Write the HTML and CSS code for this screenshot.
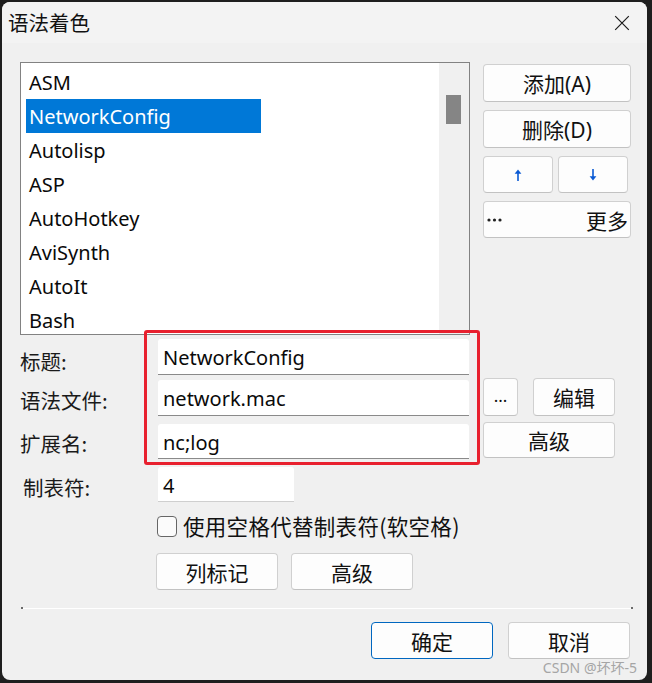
FILE: index.html
```html
<!DOCTYPE html>
<html lang="zh-CN">
<head>
<meta charset="utf-8">
<title>语法着色</title>
<link rel="stylesheet" href="styles.css">
</head>
<body>
<div class="window">
  <div class="titlebar">
    <span class="title">语法着色</span>
    <svg class="close" width="16" height="16" viewBox="0 0 16 16"><path d="M1.2 1.2L14.8 14.8M14.8 1.2L1.2 14.8" stroke="#1b1b1b" stroke-width="1.2" fill="none"/></svg>
  </div>
  <div class="content">
    <div class="top">
      <div class="listbox">
        <ul class="items">
          <li>ASM</li>
          <li class="sel">NetworkConfig</li>
          <li>Autolisp</li>
          <li>ASP</li>
          <li>AutoHotkey</li>
          <li>AviSynth</li>
          <li>AutoIt</li>
          <li>Bash</li>
        </ul>
        <div class="scrollbar"><div class="thumb"></div></div>
      </div>
      <div class="side">
        <button class="btn wide">添加(A)</button>
        <button class="btn wide">删除(D)</button>
        <div class="pair">
          <button class="btn half"><svg width="8" height="12" viewBox="0 0 8 12"><path d="M4 2.5V12" stroke="#0a5ad4" stroke-width="1.6"/><path d="M0.6 4.8L4 0.6L7.4 4.8Z" fill="#0a5ad4"/></svg></button>
          <button class="btn half"><svg width="8" height="12" viewBox="0 0 8 12"><path d="M4 0V9.5" stroke="#0a5ad4" stroke-width="1.6"/><path d="M0.6 7.2L4 11.4L7.4 7.2Z" fill="#0a5ad4"/></svg></button>
        </div>
        <button class="btn wide more"><svg class="dots" width="15" height="4" viewBox="0 0 15 4"><circle cx="2" cy="2" r="1.6" fill="#222"/><circle cx="7.5" cy="2" r="1.6" fill="#222"/><circle cx="13" cy="2" r="1.6" fill="#222"/></svg><span>更多</span></button>
      </div>
    </div>

    <div class="form">
      <div class="annot"></div>
      <div class="row r1">
        <span class="label">标题:</span>
        <div class="input wide-in">NetworkConfig</div>
      </div>
      <div class="row r2">
        <span class="label">语法文件:</span>
        <div class="input wide-in">network.mac</div>
        <button class="btn dots-btn">...</button>
        <button class="btn edit">编辑</button>
      </div>
      <div class="row r3">
        <span class="label">扩展名:</span>
        <div class="input wide-in">nc;log</div>
        <button class="btn adv">高级</button>
      </div>
      <div class="row r4">
        <span class="label indent">制表符:</span>
        <div class="input tab-in">4</div>
      </div>
      <div class="row r5">
        <span class="checkbox"></span>
        <span class="check-text">使用空格代替制表符(软空格)</span>
      </div>
      <div class="row r6">
        <button class="btn mid">列标记</button>
        <button class="btn mid">高级</button>
      </div>
    </div>

    <div class="sep"></div>

    <div class="footer">
      <button class="btn foot primary">确定</button>
      <button class="btn foot">取消</button>
    </div>
  </div>
  <div class="watermark">CSDN @坏坏-5</div>
</div>
</body>
</html>
```

FILE: styles.css
```css
* { box-sizing: border-box; }
html, body { margin: 0; padding: 0; }
body {
  background: #1e1e1e;
  width: 652px;
  height: 683px;
  overflow: hidden;
  font-family: "Noto Sans", "Noto Sans CJK SC", sans-serif;
  color: #000;
}
.window {
  position: relative;
  margin: 2px 0 0 2px;
  width: 645px;
  height: 678px;
  background: #f0f0f0;
  border-radius: 8px;
  overflow: hidden;
}
.titlebar {
  height: 41px;
  background: #f3f3f3;
  display: flex;
  align-items: center;
  justify-content: space-between;
  padding: 0 17px 0 6px;
}
.title {
  font-family: "Noto Sans CJK SC", sans-serif;
  font-size: 20.5px;
  line-height: 41px;
  color: #111;
}
.close { display: block; }

.content { padding: 19px 0 0 18px; }

.top { display: flex; align-items: flex-start; }
.listbox {
  width: 450px;
  height: 273px;
  border: 1px solid #828282;
  background: #fff;
  display: flex;
  justify-content: space-between;
}
.items {
  list-style: none;
  margin: 2px 0 0 5px;
  padding: 0;
  font-size: 20px;
  line-height: 34px;
}
.items li {
  padding: 2px 0 0 3px;
  width: 235px;
  height: 34px;
  line-height: 32px;
  white-space: nowrap;
  color: #0a0a0a;
}
.items li.sel { background: #0078d7; color: #fff; }
.scrollbar {
  width: 30px;
  background: #f0f0f0;
  padding: 32px 0 0 7px;
}
.thumb { width: 15px; height: 29px; background: #858585; }

.side {
  margin: 2px 0 0 13px;
  width: 148px;
  display: flex;
  flex-direction: column;
  gap: 8px;
}
.btn {
  font-family: "Noto Sans", "Noto Sans CJK SC", sans-serif;
  font-size: 21px;
  color: #111;
  background: #fdfdfd;
  border: 1px solid #d0d0d0;
  border-bottom-color: #c2c2c2;
  border-radius: 4px;
  padding: 0;
  display: flex;
  align-items: center;
  justify-content: center;
}
.btn.wide { width: 148px; height: 38px; }
.pair { display: flex; gap: 5px; }
.btn.half { width: 70px; height: 37px; }
.btn.more {
  height: 37px;
  justify-content: space-between;
  padding: 0 2px 0 3px;
}
.dots { display: block; margin-top: 1px; }

.form { position: relative; margin-top: 4px; }
.annot {
  position: absolute;
  left: 124px;
  top: -9px;
  width: 336px;
  height: 135px;
  border: 3px solid #e8202e;
  border-radius: 3px;
  pointer-events: none;
}
.row { display: flex; align-items: flex-start; }
.label {
  width: 138px;
  font-family: "Noto Sans CJK SC", sans-serif;
  font-size: 20.5px;
  color: #1a1a1a;
  padding-top: 8px;
  line-height: 28px;
}
.label.indent { padding-left: 3px; }
.input {
  background: #fff;
  border-bottom: 1px solid #8a8a8a;
  border-radius: 3px 3px 0 0;
  font-size: 20px;
  padding-left: 5px;
  white-space: nowrap;
  color: #0a0a0a;
}
.wide-in { width: 311px; }
.tab-in { width: 136px; height: 35px; line-height: 37px; border-bottom-color: #cfcfcf; }

.r1 { height: 36px; }
.r1 .input { height: 36px; line-height: 38px; }
.r2 { margin-top: 3px; height: 38px; }
.r2 .label { padding-top: 8px; }
.r2 .input { margin-top: 2px; height: 36px; line-height: 38px; }
.btn.dots-btn { margin-left: 14px; width: 35px; height: 38px; font-size: 17px; padding-bottom: 4px; }
.btn.edit { margin-left: 15px; width: 82px; height: 38px; }
.r3 { margin-top: 6px; height: 37px; }
.r3 .label { padding-top: 7px; }
.r3 .input { margin-top: 2px; height: 35px; line-height: 37px; }
.btn.adv { margin-left: 14px; width: 132px; height: 36px; }
.r4 { margin-top: 8px; height: 35px; }
.r4 .label { padding-top: 6px; }
.r5 { margin-top: 10px; height: 28px; padding-left: 137px; align-items: center; }
.checkbox {
  width: 20px;
  height: 21px;
  border: 1px solid #666;
  border-radius: 4px;
  background: #fbfbfb;
}
.check-text {
  margin-left: 6px;
  font-family: "Noto Sans CJK SC", sans-serif;
  font-size: 21.5px;
  letter-spacing: 0.3px;
  line-height: 28px;
  color: #111;
}
.r6 { margin-top: 13px; padding-left: 136px; gap: 13px; }
.btn.mid { width: 122px; height: 37px; }

.sep {
  position: relative;
  margin: 18px 0 0 1px;
  width: 612px;
  height: 1px;
  background: #fff;
}
.sep::before, .sep::after {
  content: "";
  position: absolute;
  top: -1px;
  width: 2px;
  height: 2px;
  background: #6a6a6a;
}
.sep::before { left: 0; }
.sep::after { right: 0; }

.footer {
  margin: 13px 17px 0 0;
  display: flex;
  justify-content: flex-end;
  gap: 15px;
}
.btn.foot { width: 122px; height: 37px; }
.btn.primary { border: 1px solid #0067c0; }

.watermark {
  position: absolute;
  right: 10px;
  top: 658px;
  font-family: "Noto Sans", "Noto Sans CJK SC", sans-serif;
  font-size: 14px;
  line-height: 16px;
  color: #a5a5a5;
}
```
